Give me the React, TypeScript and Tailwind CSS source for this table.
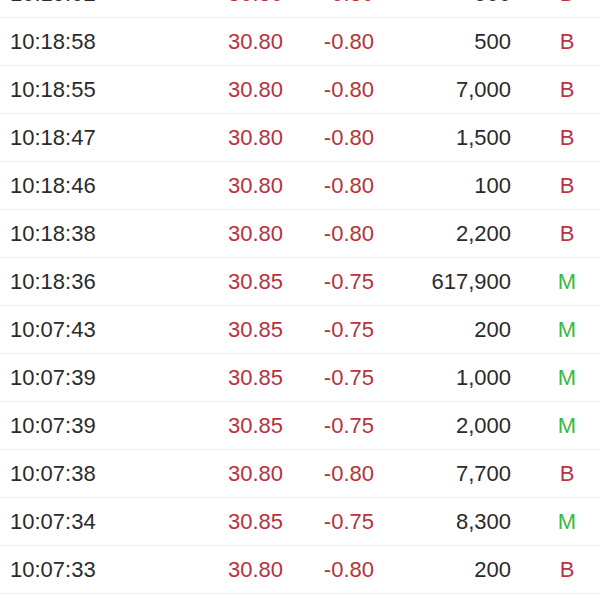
import React from "react";

type Trade = {
    time: string;
    price: string;
    change: string;
    volume: string;
    flag: "B" | "M";
};

const TRADES: Trade[] = [
    { time: "10:19:02", price: "30.80", change: "-0.80", volume: "500", flag: "B" },
    { time: "10:18:58", price: "30.80", change: "-0.80", volume: "500", flag: "B" },
    { time: "10:18:55", price: "30.80", change: "-0.80", volume: "7,000", flag: "B" },
    { time: "10:18:47", price: "30.80", change: "-0.80", volume: "1,500", flag: "B" },
    { time: "10:18:46", price: "30.80", change: "-0.80", volume: "100", flag: "B" },
    { time: "10:18:38", price: "30.80", change: "-0.80", volume: "2,200", flag: "B" },
    { time: "10:18:36", price: "30.85", change: "-0.75", volume: "617,900", flag: "M" },
    { time: "10:07:43", price: "30.85", change: "-0.75", volume: "200", flag: "M" },
    { time: "10:07:39", price: "30.85", change: "-0.75", volume: "1,000", flag: "M" },
    { time: "10:07:39", price: "30.85", change: "-0.75", volume: "2,000", flag: "M" },
    { time: "10:07:38", price: "30.80", change: "-0.80", volume: "7,700", flag: "B" },
    { time: "10:07:34", price: "30.85", change: "-0.75", volume: "8,300", flag: "M" },
    { time: "10:07:33", price: "30.80", change: "-0.80", volume: "200", flag: "B" },
    { time: "10:07:31", price: "30.80", change: "-0.80", volume: "1,000", flag: "B" }
];

export default function App() {
    return (
        <div className="w-[600px] h-[600px] overflow-hidden bg-white font-['Liberation_Sans',Arial,sans-serif] text-[22px] leading-none">
            <div className="-mt-[30px]">
                {TRADES.map((t, i) => (
                    <div key={i} className="flex items-center h-[48px] border-b border-[#f0f0f0]">
                        <div className="w-[200px] shrink-0 pl-[10px] text-[#2b2b2b]">{t.time}</div>
                        <div className="w-[83px] shrink-0 text-right text-[#b8323a]">{t.price}</div>
                        <div className="w-[91px] shrink-0 text-right text-[#b8323a]">{t.change}</div>
                        <div className="w-[137px] shrink-0 text-right text-[#2b2b2b]">{t.volume}</div>
                        <div className={`w-[56px] ml-[28px] shrink-0 text-center ${t.flag === "B" ? "text-[#c0333b]" : "text-[#3cb93c]"}`}>
                            {t.flag}
                        </div>
                    </div>
                ))}
            </div>
        </div>
    );
}
